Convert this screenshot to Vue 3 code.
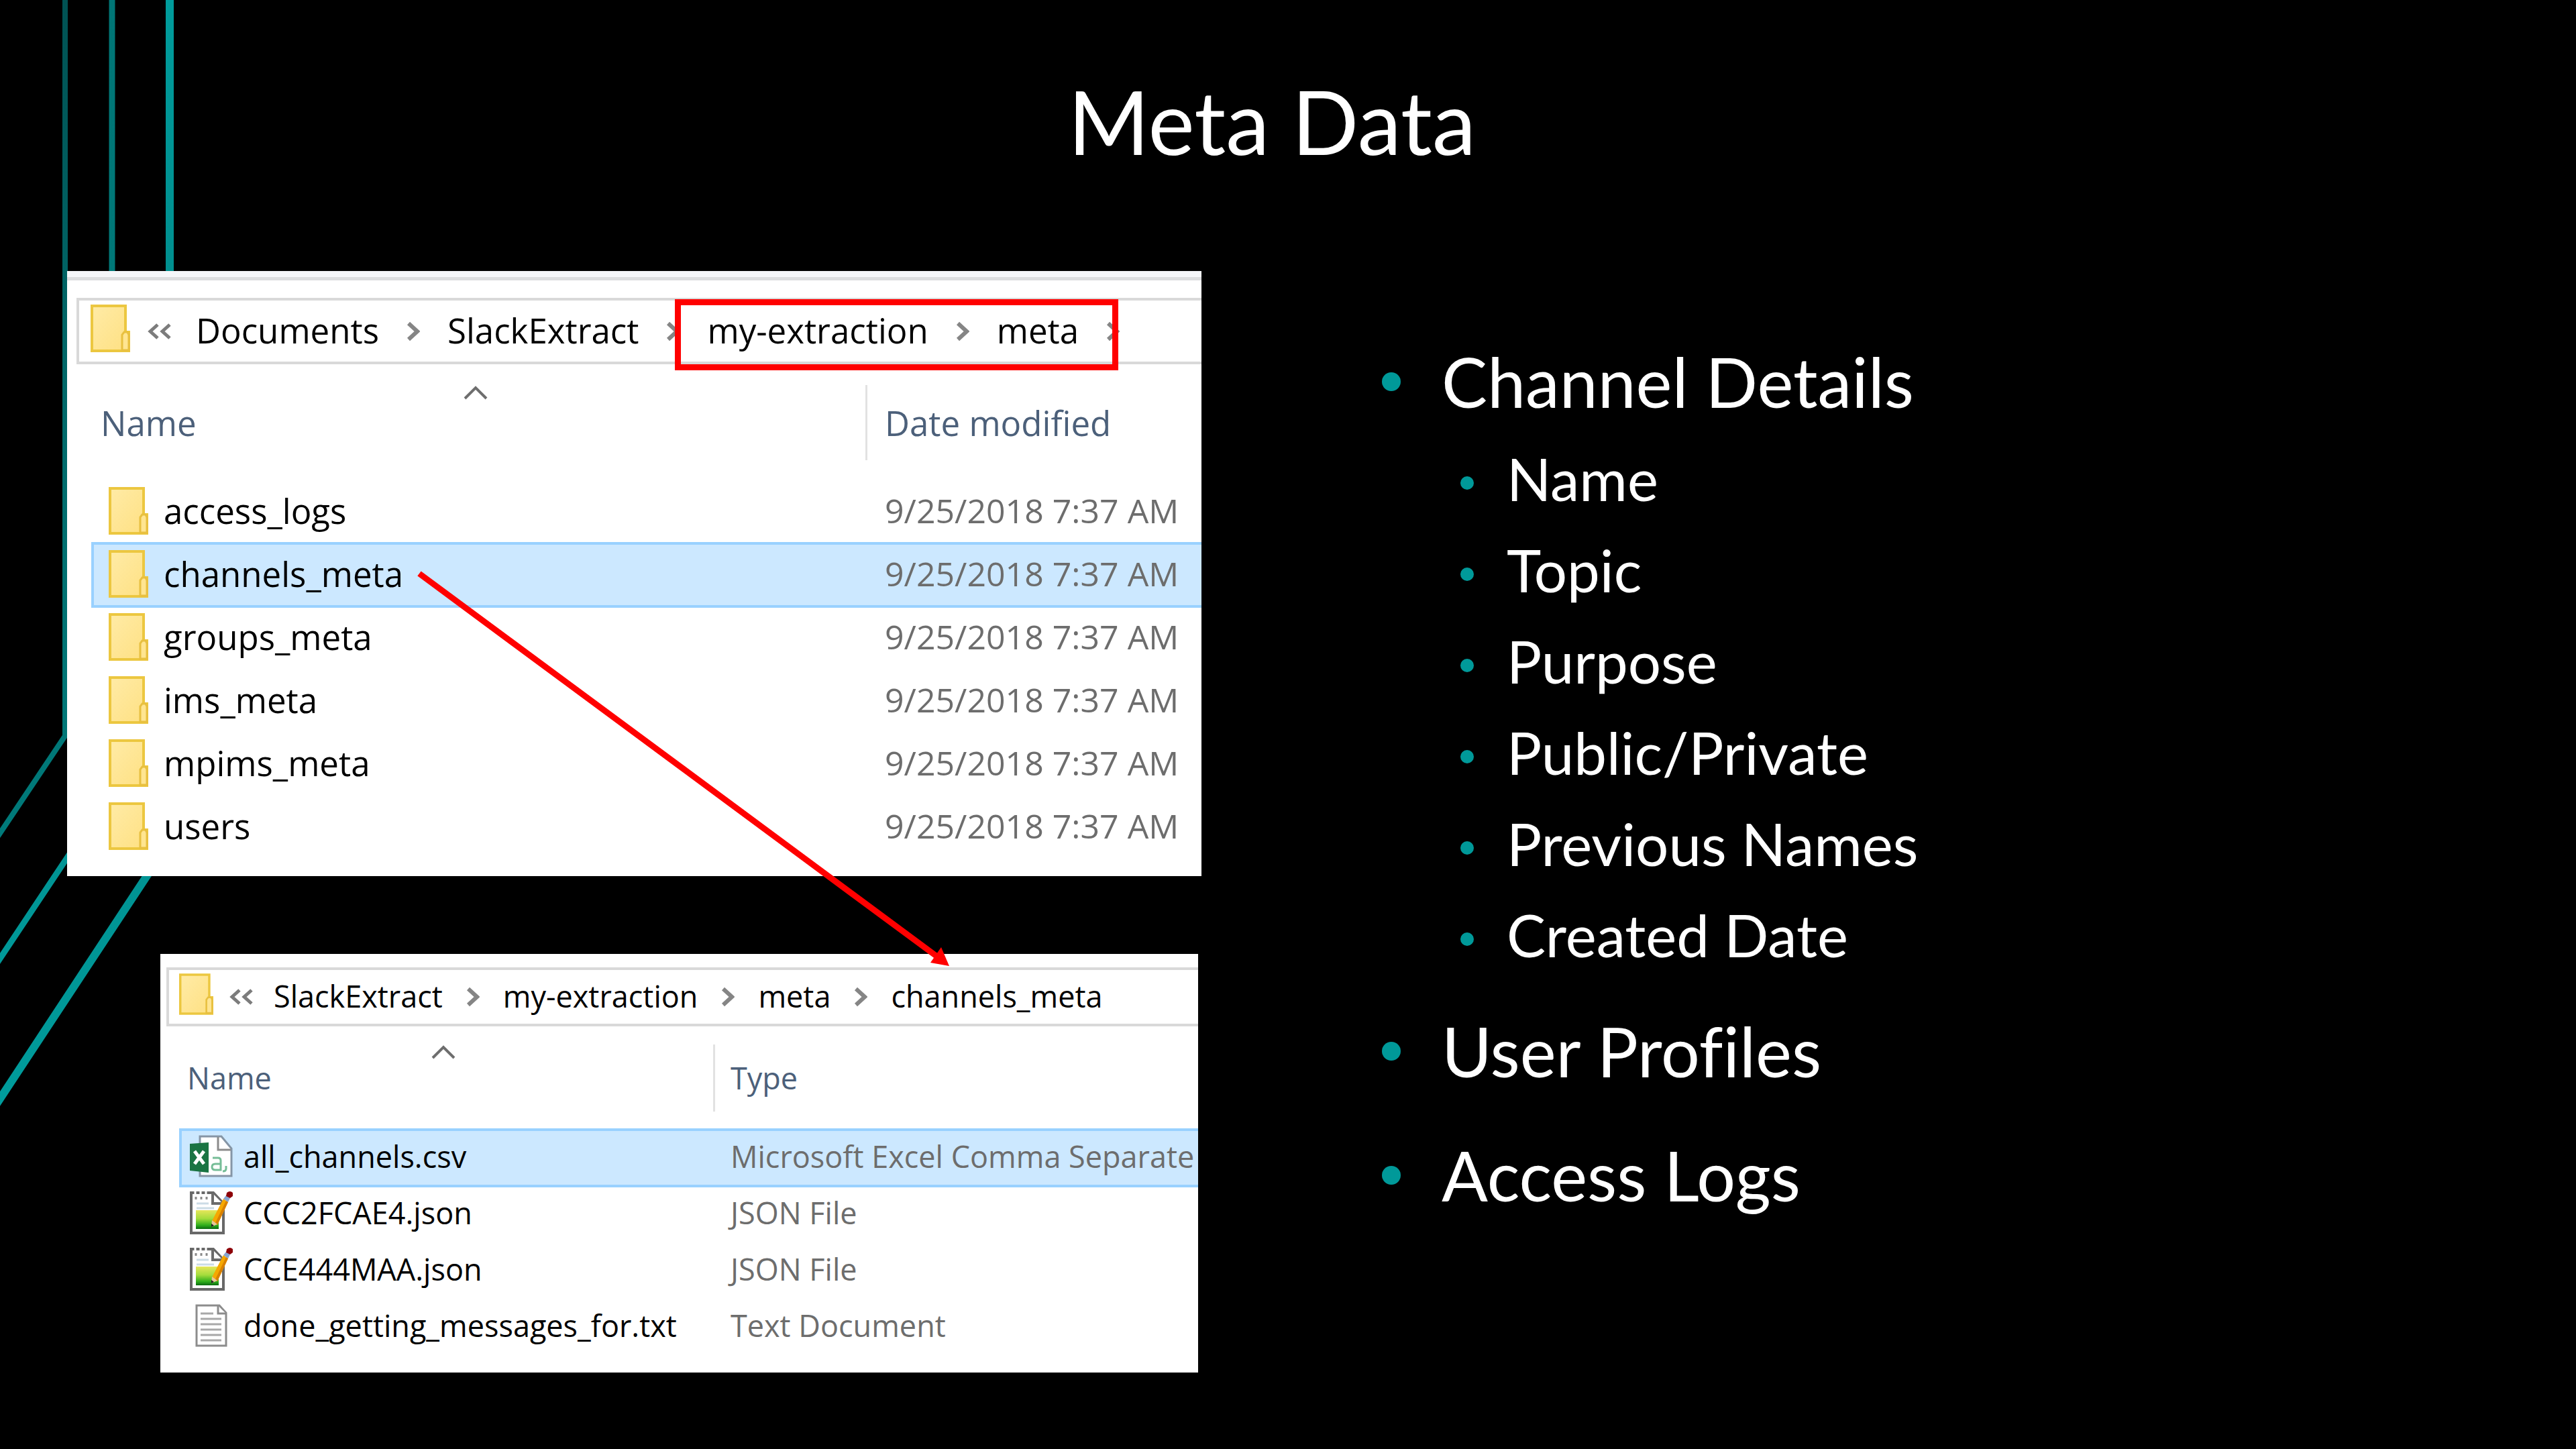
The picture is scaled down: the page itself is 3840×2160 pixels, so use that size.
<script setup>
const folders = [
  { name: 'access_logs', date: '9/25/2018 7:37 AM' },
  { name: 'channels_meta', date: '9/25/2018 7:37 AM', selected: true },
  { name: 'groups_meta', date: '9/25/2018 7:37 AM' },
  { name: 'ims_meta', date: '9/25/2018 7:37 AM' },
  { name: 'mpims_meta', date: '9/25/2018 7:37 AM' },
  { name: 'users', date: '9/25/2018 7:37 AM' }
]

const files = [
  { name: 'all_channels.csv', type: 'Microsoft Excel Comma Separate', icon: 'csv', selected: true },
  { name: 'CCC2FCAE4.json', type: 'JSON File', icon: 'json' },
  { name: 'CCE444MAA.json', type: 'JSON File', icon: 'json' },
  { name: 'done_getting_messages_for.txt', type: 'Text Document', icon: 'txt' }
]

const points = [
  {
    text: 'Channel Details',
    children: ['Name', 'Topic', 'Purpose', 'Public/Private', 'Previous Names', 'Created Date']
  },
  { text: 'User Profiles' },
  { text: 'Access Logs' }
]
</script>

<template>
  <main class="slide">
    <svg class="rails" width="280" height="1700" viewBox="0 0 280 1700" fill="none" aria-hidden="true">
      <defs>
        <linearGradient id="rail-a" gradientUnits="userSpaceOnUse" x1="0" y1="0" x2="0" y2="1250">
          <stop offset="0" stop-color="#005253" />
          <stop offset="0.3" stop-color="#006162" />
          <stop offset="0.85" stop-color="#007676" />
          <stop offset="1" stop-color="#007a7a" />
        </linearGradient>
        <linearGradient id="rail-b" gradientUnits="userSpaceOnUse" x1="0" y1="0" x2="0" y2="1440">
          <stop offset="0" stop-color="#007575" />
          <stop offset="0.3" stop-color="#007878" />
          <stop offset="0.85" stop-color="#009292" />
          <stop offset="1" stop-color="#009999" />
        </linearGradient>
        <linearGradient id="rail-c" gradientUnits="userSpaceOnUse" x1="0" y1="0" x2="0" y2="1650">
          <stop offset="0" stop-color="#009c9c" />
          <stop offset="0.25" stop-color="#008f8f" />
          <stop offset="0.8" stop-color="#009393" />
          <stop offset="1" stop-color="#009c9c" />
        </linearGradient>
        <linearGradient id="folder-fill" x1="0" y1="0" x2="1" y2="1">
          <stop offset="0" stop-color="#ffeba6" />
          <stop offset="1" stop-color="#fee082" />
        </linearGradient>
        <linearGradient id="note-fill" x1="0" y1="0" x2="0" y2="1">
          <stop offset="0" stop-color="#e6e65a" />
          <stop offset="0.45" stop-color="#a4dc3c" />
          <stop offset="0.8" stop-color="#2fae1c" />
          <stop offset="1" stop-color="#0b6a10" />
        </linearGradient>
        <symbol id="folder" viewBox="0 0 59 71">
          <path d="M2 2H52V41H57V69H2Z" fill="url(#folder-fill)" stroke="#ecc740" stroke-width="4" />
          <path d="M47 68V45L50 41H55L57 45V68Z" fill="#ffe591" stroke="#e8c040" stroke-width="3" />
        </symbol>
        <symbol id="csv" viewBox="0 0 64 64">
          <path d="M15 2H47L62 20V61H15Z" fill="#fff" stroke="#8595a6" stroke-width="3" />
          <path d="M42 3V22H61" stroke="#8b8b8b" stroke-width="3" fill="#fff" />
          <path d="M0 13L28 11V56L0 53Z" fill="#1a7443" />
          <path d="M7 24L21 43M21 24L7 43" stroke="#fff" stroke-width="5" />
          <path d="M34 34H42Q46 34 46 38V52H38Q33 52 33 47.500T38 43H46" stroke="#76bd97" stroke-width="3" fill="none" />
          <path d="M54 46V50Q54 54 49 54" stroke="#76bd97" stroke-width="3" fill="none" />
        </symbol>
        <symbol id="json" viewBox="0 0 64 64">
          <path d="M2 2H35L50 18V62H2Z" fill="#fff" stroke="#686868" stroke-width="4" />
          <path d="M34 3V18H49" fill="#fff" stroke="#6c6c6c" stroke-width="4" />
          <path d="M8 0V6M16 0V6M24 0V6" stroke="#fff" stroke-width="3" />
          <path d="M9 8V12M17 8V12M25 8V12" stroke="#8a8a8a" stroke-width="3" />
          <path d="M10 18H28M10 25H36" stroke="#ccdce6" stroke-width="3" />
          <rect x="9" y="28" width="34" height="28" fill="url(#note-fill)" />
          <path d="M33 44L50 11L57 16L41 50Z" fill="#f5a800" />
          <path d="M38 47L54 14L57 16L41 50Z" fill="#d98000" />
          <path d="M33 43L32 53L41 49Z" fill="#e6c79a" />
          <path d="M32 48V53L36 51Z" fill="#222" />
          <path d="M50 11L54 6L60 10L57 16Z" fill="#88a5cf" />
          <path d="M55 2Q60 -2 64 2V7L60 10L54 7Z" fill="#8d0008" />
        </symbol>
        <symbol id="txt" viewBox="0 0 64 64">
          <path d="M10 2H44L54 13V62H10Z" fill="#fff" stroke="#8c8c8c" stroke-width="3" />
          <path d="M42 3V14H54" fill="#fff" stroke="#8c8c8c" stroke-width="3" />
          <path d="M16 14H35M16 22H47M16 30H47M16 38H47M16 46H47M16 54H47" stroke="#a8a8a8" stroke-width="3" />
        </symbol>
        <symbol id="chevron" viewBox="0 0 20 30">
          <path d="M3 3L16 15L3 27" fill="none" stroke="#858585" stroke-width="6" />
        </symbol>
        <symbol id="overflow" viewBox="0 0 36 24">
          <path d="M15 2L4 12L15 22M33 2L22 12L33 22" fill="none" stroke="#7c7c7c" stroke-width="5" />
        </symbol>
        <symbol id="sort" viewBox="0 0 36 22">
          <path d="M2 20L18 4L34 20" fill="none" stroke="#6e6e6e" stroke-width="4" />
        </symbol>
      </defs>
      <path d="M97 0V1097L-10 1257" stroke="url(#rail-a)" stroke-width="8" />
      <path d="M167 0V1178L-10 1444" stroke="url(#rail-b)" stroke-width="9" />
      <path d="M253 0V1254L-10 1653" stroke="url(#rail-c)" stroke-width="12" />
    </svg>

    <h1 class="title">Meta Data</h1>

    <div class="content">
      <section class="figures">
        <article class="window window-folders">
          <div class="strip"></div>
          <nav class="crumbs" aria-label="Folder path">
            <span class="lead">
              <svg class="crumb-folder"><use href="#folder" /></svg>
              <svg class="overflow"><use href="#overflow" /></svg>
            </span>
            <a href="#">Documents</a>
            <svg class="chevron"><use href="#chevron" /></svg>
            <a href="#">SlackExtract</a>
            <svg class="chevron"><use href="#chevron" /></svg>
            <span class="marked">
              <a href="#">my-extraction</a>
              <svg class="chevron"><use href="#chevron" /></svg>
              <a href="#">meta</a>
              <svg class="chevron"><use href="#chevron" /></svg>
            </span>
          </nav>
          <table>
            <thead>
              <tr>
                <th class="col-name" scope="col">
                  Name
                  <svg class="sort"><use href="#sort" /></svg>
                </th>
                <th scope="col"><span class="divided">Date modified</span></th>
              </tr>
            </thead>
            <tbody>
              <tr v-for="row in folders" :key="row.name" :class="{ selected: row.selected }">
                <td>
                  <span class="entry">
                    <svg class="icon"><use href="#folder" /></svg>
                    {{ row.name }}
                  </span>
                </td>
                <td class="detail">{{ row.date }}</td>
              </tr>
            </tbody>
          </table>
        </article>

        <article class="window window-files">
          <nav class="crumbs" aria-label="Folder path">
            <span class="lead">
              <svg class="crumb-folder"><use href="#folder" /></svg>
              <svg class="overflow"><use href="#overflow" /></svg>
            </span>
            <a href="#">SlackExtract</a>
            <svg class="chevron"><use href="#chevron" /></svg>
            <a href="#">my-extraction</a>
            <svg class="chevron"><use href="#chevron" /></svg>
            <a href="#">meta</a>
            <svg class="chevron"><use href="#chevron" /></svg>
            <a href="#">channels_meta</a>
          </nav>
          <table>
            <thead>
              <tr>
                <th class="col-name" scope="col">
                  Name
                  <svg class="sort"><use href="#sort" /></svg>
                </th>
                <th scope="col"><span class="divided">Type</span></th>
              </tr>
            </thead>
            <tbody>
              <tr v-for="row in files" :key="row.name" :class="{ selected: row.selected }">
                <td>
                  <span class="entry">
                    <svg class="icon"><use :href="'#' + row.icon" /></svg>
                    {{ row.name }}
                  </span>
                </td>
                <td class="detail">{{ row.type }}</td>
              </tr>
            </tbody>
          </table>
        </article>

        <svg class="arrow" aria-hidden="true">
          <path d="M625 451L1397 1022" stroke="#f00" stroke-width="9" />
          <path d="M1415 1036L1403 1008L1387 1031Z" fill="#f00" />
        </svg>
      </section>

      <ul class="points">
        <li v-for="point in points" :key="point.text">
          <span class="line">{{ point.text }}</span>
          <ul v-if="point.children" class="sub">
            <li v-for="child in point.children" :key="child">
              <span class="line">{{ child }}</span>
            </li>
          </ul>
        </li>
      </ul>
    </div>
  </main>
</template>

<style>
body {
  margin: 0;
  background: #000;
}
</style>

<style scoped>
.slide {
  position: relative;
  min-height: 100vh;
  box-sizing: border-box;
  background: #000;
  color: #fff;
  font-family: Lato, Carlito, sans-serif;
  font-variant-ligatures: none;
  overflow: hidden;
}

.rails {
  position: absolute;
  left: 0;
  top: 0;
}

.title {
  margin: 0;
  padding: 101px 48px 143px 0;
  font-size: 131px;
  font-weight: 400;
  line-height: 160px;
  text-align: center;
}

.content {
  display: grid;
  grid-template-columns: 1791fr 2049fr;
  align-items: start;
}

.figures {
  position: relative;
  min-width: 0;
  display: flex;
  flex-direction: column;
  gap: 116px;
  padding-bottom: 114px;
}

.arrow {
  position: absolute;
  left: 0;
  top: 0;
  width: 100%;
  height: 100%;
  pointer-events: none;
}

.window {
  position: relative;
  overflow: hidden;
  background: #fff;
  color: #000;
  font-family: "Open Sans", "Noto Sans", sans-serif;
  white-space: nowrap;
  padding-bottom: 26px;
}

.window-folders {
  margin-left: 100px;
  font-size: 51px;
}

.window-files {
  margin-left: 239px;
  margin-right: 5px;
  padding-top: 20px;
  font-size: 45px;
}

.strip {
  height: 9px;
  margin-bottom: 26px;
  background: #f5f6f9;
  border-bottom: 5px solid #dcdddf;
}

.crumbs {
  display: flex;
  align-items: center;
  gap: 41px;
  box-sizing: border-box;
  border: 4px solid #d9d9d9;
  border-right: 0;
}

.crumbs a {
  margin-bottom: 4px;
  color: inherit;
  text-decoration: none;
}

.window-folders .crumbs {
  height: 99px;
  margin-left: 14px;
  padding-left: 17px;
}

.window-files .crumbs {
  height: 88px;
  margin-left: 9px;
  padding-left: 15px;
  gap: 35px;
}

.lead {
  display: flex;
  align-items: center;
  gap: 26px;
  margin-right: -5px;
}

.window-files .lead {
  gap: 24px;
}

.crumb-folder {
  width: 59px;
  height: 71px;
  margin-bottom: 8px;
}

.window-files .crumb-folder {
  width: 51px;
  height: 64px;
}

.overflow {
  width: 36px;
  height: 24px;
}

.chevron {
  width: 20px;
  height: 30px;
}

.marked {
  position: relative;
  display: flex;
  align-items: center;
  gap: 41px;
}

.marked::after {
  content: "";
  position: absolute;
  inset: -11px 2px -21px -48px;
  border: 9px solid #f00;
}

table {
  border-collapse: collapse;
  table-layout: fixed;
}

.window-folders table {
  width: calc(100% - 28px);
  margin-left: 38px;
}

.window-files table {
  width: calc(100% - 20px);
  margin-left: 30px;
}

th,
td {
  padding: 0;
  text-align: left;
  font-weight: 400;
  line-height: 64px;
}

th {
  color: #4c607a;
}

.col-name {
  position: relative;
}

.sort {
  position: absolute;
  width: 36px;
  height: 22px;
}

.window-folders .col-name {
  width: 1140px;
  padding-left: 12px;
}

.window-files .col-name {
  width: 784px;
  padding-left: 10px;
}

.window-folders .sort {
  left: 553px;
  top: 31px;
}

.window-files .sort {
  left: 374px;
  top: 27px;
}

.window-folders thead tr {
  height: 173px;
}

.window-files thead tr {
  height: 154px;
}

.divided {
  display: block;
  border-left: 3px solid #e2e2e2;
}

.window-folders .divided {
  padding-left: 26px;
  line-height: 112px;
}

.window-files .divided {
  padding-left: 23px;
  line-height: 100px;
}

.window-folders tbody tr {
  height: 94px;
}

.window-files tbody tr {
  height: 84px;
}

td {
  padding-bottom: 4px;
}

.entry {
  display: flex;
  align-items: center;
}

.window-folders .entry {
  gap: 23px;
  padding-left: 24px;
}

.window-files .entry {
  gap: 16px;
  padding-left: 14px;
}

.icon {
  width: 59px;
  height: 71px;
}

.window-files .icon {
  width: 64px;
  height: 64px;
}

.detail {
  color: #6d6d6d;
}

.window-folders .detail {
  padding-left: 29px;
  font-size: 50px;
}

.window-files .detail {
  padding-left: 26px;
}

.selected {
  background: #cce8ff;
  outline: 4px solid #99d1ff;
  outline-offset: -2px;
}

.points,
.sub {
  margin: 0;
  padding: 0;
  list-style: none;
}

.points {
  padding: 109px 0 0 269px;
  font-size: 102px;
}

.points > li + li {
  margin-top: 73px;
}

.line {
  display: flex;
  align-items: center;
  gap: 61px;
  line-height: 112px;
}

.line::before {
  content: "";
  width: 28px;
  height: 28px;
  border-radius: 50%;
  background: #009999;
}

.sub {
  margin: 33px 0 -12px 117px;
  font-size: 87px;
}

.sub li + li {
  margin-top: 24px;
}

.sub .line {
  gap: 49px;
}

.sub .line::before {
  width: 20px;
  height: 20px;
  margin-top: 12px;
}
</style>
